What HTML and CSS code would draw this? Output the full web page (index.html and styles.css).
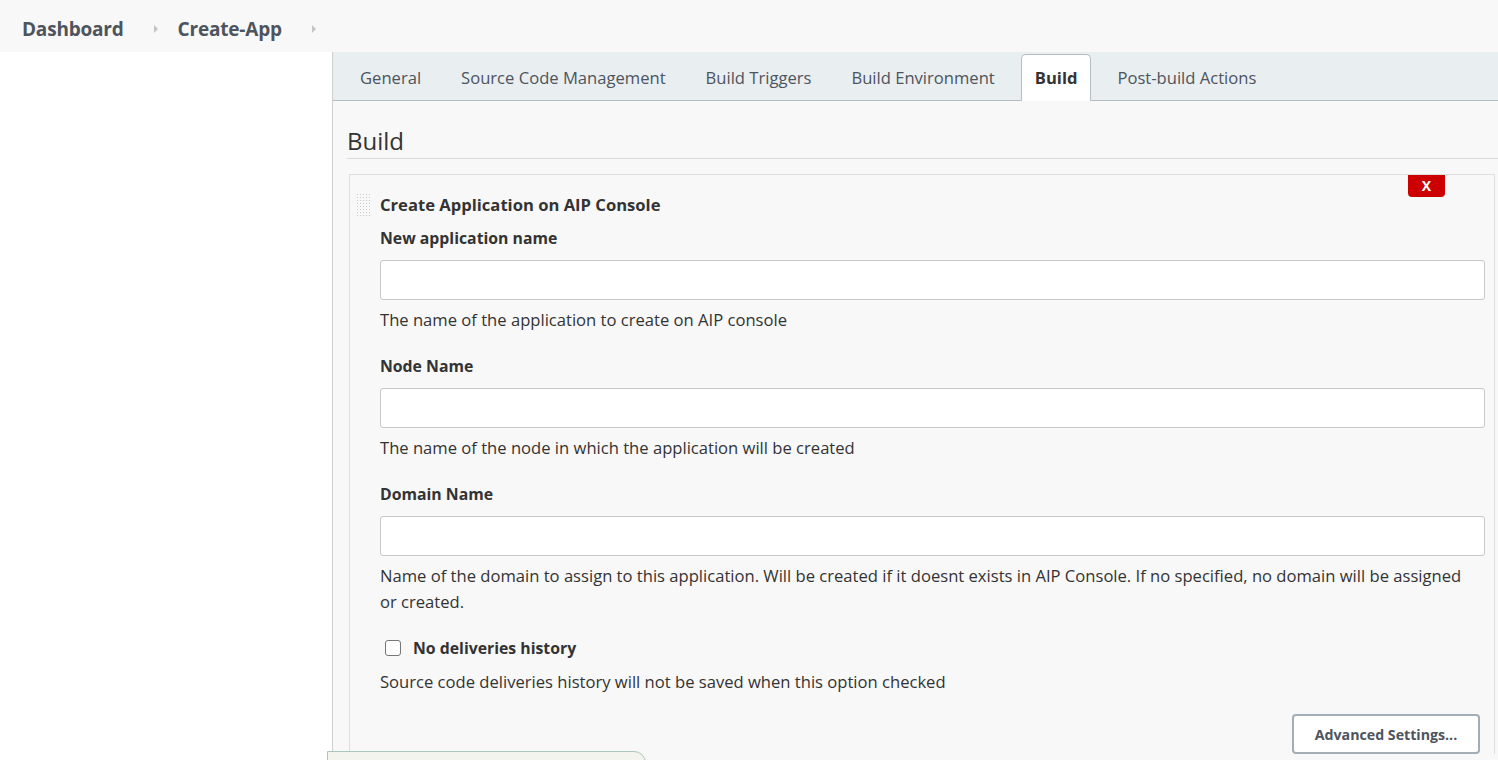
FILE: index.html
```html
<!DOCTYPE html>
<html>
<head>
<meta charset="utf-8">
<link rel="stylesheet" href="styles.css">
</head>
<body>
<div class="topbar">
  <span class="crumb">Dashboard</span>
  <span class="chev"></span>
  <span class="crumb">Create-App</span>
  <span class="chev"></span>
</div>
<div class="layout">
  <div class="sidebar"></div>
  <div class="main">
    <div class="tabs">
      <div class="tab">General</div>
      <div class="tab">Source Code Management</div>
      <div class="tab">Build Triggers</div>
      <div class="tab">Build Environment</div>
      <div class="tab active">Build</div>
      <div class="tab">Post-build Actions</div>
    </div>
    <div class="content">
      <h2 class="section-title">Build</h2>
      <div class="card">
        <button class="close">X</button>
        <div class="card-head">
          <span class="handle"></span>
          <span class="card-title">Create Application on AIP Console</span>
        </div>
        <div class="card-body">
          <div class="field">
            <div class="label">New application name</div>
            <input class="input" type="text">
            <div class="help">The name of the application to create on AIP console</div>
          </div>
          <div class="field">
            <div class="label">Node Name</div>
            <input class="input" type="text">
            <div class="help">The name of the node in which the application will be created</div>
          </div>
          <div class="field">
            <div class="label">Domain Name</div>
            <input class="input" type="text">
            <div class="help">Name of the domain to assign to this application. Will be created if it doesnt exists in AIP Console. If no specified, no domain will be assigned or created.</div>
          </div>
          <div class="field">
            <label class="check"><span class="box"></span><span class="label">No deliveries history</span></label>
            <div class="help">Source code deliveries history will not be saved when this option checked</div>
          </div>
          <div class="actions">
            <button class="adv">Advanced Settings...</button>
          </div>
        </div>
      </div>
    </div>
  </div>
</div>
<div class="bottom-bar"></div>
</body>
</html>
```

FILE: styles.css
```css
html, body {
  margin: 0;
  padding: 0;
  height: 760px;
  overflow: hidden;
  background: #fff;
  font-family: "Open Sans", "Noto Sans", sans-serif;
  color: #333;
}

.topbar {
  height: 52px;
  background: #f8f8f8;
  display: flex;
  align-items: center;
  padding: 5px 0 0 22px;
  box-sizing: border-box;
}
.crumb {
  font-size: 19px;
  font-weight: 700;
  color: #4d545d;
  letter-spacing: -0.2px;
}
.chev {
  width: 0;
  height: 0;
  border-top: 4px solid transparent;
  border-bottom: 4px solid transparent;
  border-left: 4px solid #c4c4c4;
  margin: 0 20px 0 30px;
}

.layout {
  display: flex;
  height: 708px;
}
.sidebar {
  width: 332px;
  flex: none;
  background: #fff;
  border-right: 1px solid #cfcfcf;
}
.main {
  flex: 1;
  background: #f8f8f8;
  min-width: 0;
}

.tabs {
  height: 49px;
  background: #e9eef1;
  border-bottom: 1px solid #b7bec3;
  display: flex;
  align-items: flex-end;
  padding-left: 13px;
  gap: 12px;
  box-sizing: border-box;
}
.tab {
  height: 46px;
  line-height: 44px;
  padding: 0 13px;
  font-size: 16.6px;
  color: #4d545d;
  box-sizing: border-box;
  margin-bottom: -1px;
  border: 1px solid transparent;
  border-bottom: none;
}
.tab.active {
  background: #fff;
  border-color: #b7bec3;
  border-radius: 5px 5px 0 0;
  font-weight: 700;
  color: #333;
  height: 47px;
  line-height: 46px;
}

.content {
  padding-left: 14px;
}
.section-title {
  margin: 0;
  padding-top: 24px;
  font-size: 24px;
  font-weight: 400;
  line-height: 32px;
  color: #333;
  border-bottom: 1px solid #dcdcdc;
  padding-bottom: 1px;
}

.card {
  position: relative;
  margin: 15px 3px 0 2px;
  border: 1px solid #dedede;
  border-bottom: none;
  background: #f8f8f8;
  padding: 18px 9px 0 6px;
}
.close {
  position: absolute;
  top: 0;
  right: 49px;
  width: 37px;
  height: 22px;
  background: #cc0000;
  color: #fff;
  border: none;
  border-radius: 0 0 4px 4px;
  font-family: "Open Sans", sans-serif;
  font-weight: 700;
  font-size: 14px;
  padding: 0;
  line-height: 22px;
}
.card-head {
  display: flex;
  align-items: center;
  height: 24px;
}
.handle {
  width: 14px;
  height: 24px;
  margin-right: 10px;
  background-image: radial-gradient(circle, #c9c9c9 0.8px, transparent 1px);
  background-size: 3px 3px;
}
.card-title {
  font-size: 16.6px;
  font-weight: 700;
  color: #333;
  margin-top: -2px;
}
.card-body {
  padding-left: 24px;
  padding-top: 9px;
}
.field {
  margin-bottom: 21px;
}
.label {
  font-size: 15.8px;
  font-weight: 700;
  line-height: 24px;
  color: #333;
}
.field > .label {
  margin-bottom: 10px;
}
.input {
  display: block;
  width: 100%;
  height: 40px;
  box-sizing: border-box;
  border: 1px solid #c8c8c8;
  border-radius: 3px;
  background: #fff;
  margin: 0;
}
.help {
  margin-top: 7px;
  font-size: 16.6px;
  line-height: 26px;
  color: #333;
  padding-right: 12px;
}
.check {
  display: flex;
  align-items: center;
  height: 24px;
}
.box {
  width: 14px;
  height: 14px;
  border: 1px solid #767676;
  border-radius: 3px;
  background: #fff;
  margin: 0 12px 0 5px;
}
.check + .help {
  margin-top: 9px;
}
.actions {
  display: flex;
  justify-content: flex-end;
  padding-right: 5px;
  margin-top: -2px;
}
.adv {
  width: 188px;
  height: 40px;
  background: #fff;
  border: 2px solid #a3adb5;
  border-radius: 4px;
  font-family: "Open Sans", sans-serif;
  font-weight: 700;
  font-size: 14.2px;
  color: #4d545d;
}

.bottom-bar {
  position: absolute;
  left: 327px;
  top: 751px;
  width: 317px;
  height: 20px;
  background: #f3f4ee;
  border: 1px solid #a9c8b9;
  border-radius: 0 12px 0 0;
}
```
